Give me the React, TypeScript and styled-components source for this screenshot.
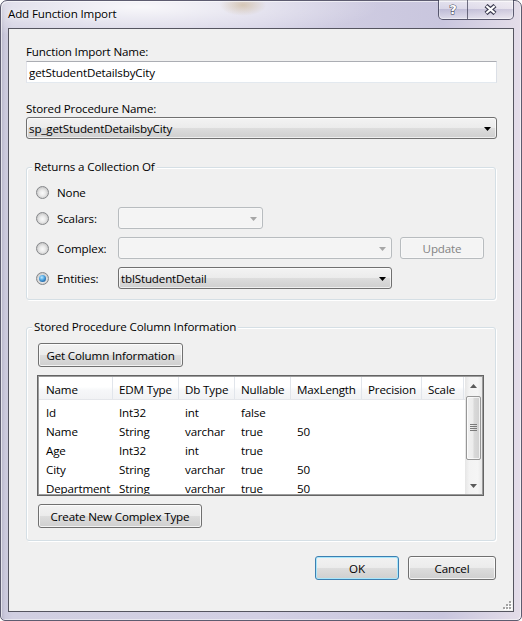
import styled, { createGlobalStyle } from "styled-components";

const uiFont = `"Open Sans", "Noto Sans", "Liberation Sans", sans-serif`;

const columns = ["Name", "EDM Type", "Db Type", "Nullable", "MaxLength", "Precision", "Scale"];
const colTemplate = "74px 66px 56px 56px 71px 60px 42px 1fr";

const rows = [
  ["Id", "Int32", "int", "false", "", "", ""],
  ["Name", "String", "varchar", "true", "50", "", ""],
  ["Age", "Int32", "int", "true", "", "", ""],
  ["City", "String", "varchar", "true", "50", "", ""],
  ["Department", "String", "varchar", "true", "50", "", ""],
];

const GlobalStyle = createGlobalStyle`
  html, body { margin: 0; padding: 0; }
  body {
    width: 522px;
    height: 621px;
    overflow: hidden;
    background: #ffffff;
    font-family: ${uiFont};
    font-size: 11.6px;
    letter-spacing: -0.15px;
    color: #000;
  }
  *, *::before, *::after { box-sizing: border-box; }
`;

const Window = styled.div`
  width: 522px;
  height: 621px;
  display: flex;
  flex-direction: column;
  padding: 0 7px 8px 7px;
  border: 1px solid #5d5c70;
  border-radius: 7px 7px 5px 5px;
  background:
    radial-gradient(ellipse 26px 12px at 242px 4px, rgba(190, 160, 110, 0.45), rgba(255, 255, 255, 0) 90%),
    radial-gradient(ellipse 280px 40px at 140px 6px, rgba(255, 255, 255, 0.85), rgba(255, 255, 255, 0) 85%),
    linear-gradient(90deg, #b8b6ca 0px, #cbc9dc 4px, #d1cfe1 12px, #d3d0e4 50%, #c9c6de 85%, #e4dde9 100%);
  box-shadow: inset 1px 1px 0 rgba(255, 255, 255, 0.6), inset -1px -1px 0 rgba(255, 255, 255, 0.5);
`;

const TitleBar = styled.div`
  height: 27px;
  flex: none;
  display: flex;
  justify-content: space-between;
  align-items: flex-start;
`;

const Title = styled.div`
  padding-top: 5px;
  line-height: 16px;
  color: #000;
  text-shadow: 0 0 6px rgba(255, 255, 255, 0.95), 0 0 2px rgba(255, 255, 255, 0.9);
`;

const CaptionGroup = styled.div`
  margin-top: -1px;
  height: 20px;
  display: flex;
  border: 1px solid rgba(58, 58, 80, 0.8);
  border-top: none;
  border-radius: 0 0 5px 5px;
  overflow: hidden;
  box-shadow: inset 0 0 0 1px rgba(255, 255, 255, 0.45);
`;

const CaptionButton = styled.div<{ $w: number }>`
  width: ${(p) => p.$w}px;
  display: flex;
  align-items: center;
  justify-content: center;
  background: linear-gradient(180deg, rgba(255, 255, 255, 0.5) 0%, rgba(255, 255, 255, 0.25) 50%, rgba(170, 168, 200, 0.35) 50%, rgba(255, 255, 255, 0.35) 100%);
  & + & {
    border-left: 1px solid rgba(58, 58, 80, 0.7);
  }
`;

const HelpGlyph = styled.span`
  font-family: "DejaVu Sans", sans-serif;
  font-weight: bold;
  font-size: 13px;
  line-height: 13px;
  letter-spacing: 0;
  color: #fff;
  -webkit-text-stroke: 1px #3d3d52;
  paint-order: stroke fill;
`;

const Client = styled.div`
  position: relative;
  flex: 1;
  display: flex;
  flex-direction: column;
  align-items: stretch;
  border: 1px solid #555560;
  background: #f0f0f0;
  padding: 14px 16px 0 17px;
`;

const Label = styled.div<{ $mt?: number }>`
  line-height: 15px;
  padding-top: 1px;
  margin-top: ${(p) => p.$mt ?? 0}px;
  margin-bottom: 2px;
`;

const TextInput = styled.input`
  height: 22px;
  width: 100%;
  border: 1px solid #abadb3;
  border-color: #abadb3 #dbdfe6 #e3e9ef #e2e3ea;
  background: #fff;
  padding: 1px 2px 0 2px;
  font: inherit;
  letter-spacing: inherit;
  color: #000;
  outline: none;
`;

const Combo = styled.div<{ $disabled?: boolean; $w?: number; $mt?: number }>`
  height: 22px;
  width: ${(p) => (p.$w ? `${p.$w}px` : "100%")};
  margin-top: ${(p) => p.$mt ?? 0}px;
  flex: none;
  display: flex;
  align-items: center;
  justify-content: space-between;
  padding: 1px 5px 0 2px;
  border: 1px solid ${(p) => (p.$disabled ? "#b8bcbf" : "#707070")};
  border-radius: 3px;
  background: ${(p) =>
    p.$disabled
      ? "#f4f4f4"
      : "linear-gradient(180deg, #f3f3f3 0%, #ebebeb 50%, #dddddd 50%, #cfcfcf 100%)"};
  box-shadow: inset 0 0 0 1px rgba(255, 255, 255, ${(p) => (p.$disabled ? 0.3 : 0.65)});
  line-height: 15px;
`;

const Arrow = ({ color = "#000" }: { color?: string }) => (
  <svg width="7" height="4" viewBox="0 0 7 4">
    <path d="M0 0h7L3.5 4z" fill={color} />
  </svg>
);

const GroupBox = styled.div<{ $mt: number; $pl: number; $pr: number; $pb: number }>`
  margin-top: ${(p) => p.$mt}px;
  margin-right: 1px;
  display: flex;
  flex-direction: column;
  align-items: flex-start;
  border: 1px solid #d5dfe5;
  border-radius: 3px;
  box-shadow: inset 1px 1px 0 #ffffff, 1px 1px 0 #ffffff;
  padding: 0 ${(p) => p.$pr}px ${(p) => p.$pb}px ${(p) => p.$pl}px;
`;

const Legend = styled.div<{ $ml: number }>`
  height: 16px;
  margin: -11px 0 0 ${(p) => p.$ml}px;
  padding: 2px 2px 0 2px;
  line-height: 15px;
  background: #f0f0f0;
`;

const RadioRow = styled.div<{ $mt: number }>`
  margin-top: ${(p) => p.$mt}px;
  height: 22px;
  align-self: stretch;
  display: flex;
  align-items: center;
`;

const RadioLabel = styled.label`
  width: 82px;
  flex: none;
  display: flex;
  align-items: center;
  gap: 8px;
  line-height: 15px;
  padding-top: 1px;
`;

const RadioCircle = styled.span<{ $checked?: boolean }>`
  width: 13px;
  height: 13px;
  margin-top: -1px;
  flex: none;
  border-radius: 50%;
  border: 1px solid #85878a;
  background: radial-gradient(circle at 50% 55%, #fafafa 0%, #ebebeb 35%, #c8c8c8 75%, #d4d4d4 100%);
  display: flex;
  align-items: center;
  justify-content: center;
  &::after {
    content: "";
    display: ${(p) => (p.$checked ? "block" : "none")};
    width: 7px;
    height: 7px;
    border-radius: 50%;
    background: radial-gradient(circle at 40% 35%, #bfeaff 0%, #53a8e2 40%, #1d5d9d 80%, #153f6c 100%);
  }
`;

const Button = styled.button<{ $w: number; $h?: number; $default?: boolean; $mt?: number }>`
  width: ${(p) => p.$w}px;
  height: ${(p) => p.$h ?? 24}px;
  margin-top: ${(p) => p.$mt ?? 0}px;
  margin-left: ${(p) => (p.$h ? 8 : 0)}px;
  flex: none;
  padding: 1px 0 0 0;
  font: inherit;
  letter-spacing: inherit;
  line-height: 15px;
  color: #000;
  border: 1px solid ${(p) => (p.$default ? "#3c7fb1" : "#707070")};
  border-radius: 3px;
  background: linear-gradient(180deg, #f2f2f2 0%, #ebebeb 50%, #dddddd 50%, #cfcfcf 100%);
  box-shadow: inset 0 0 0 1px ${(p) => (p.$default ? "#a8e6fb" : "rgba(255, 255, 255, 0.75)")};
  &:disabled {
    border-color: #b8bcbf;
    background: #f4f4f4;
    color: #838383;
    box-shadow: inset 0 0 0 1px rgba(255, 255, 255, 0.4);
  }
`;

const ListBox = styled.div`
  width: 447px;
  height: 121px;
  margin: 8px 0 0 -1px;
  flex: none;
  display: flex;
  border: 1px solid #646464;
  padding: 1px;
  background: #fff;
  box-shadow: inset 0 0 0 1px #9c9c9c;
`;

const ListContent = styled.div`
  flex: 1;
  display: flex;
  flex-direction: column;
  overflow: hidden;
`;

const HeaderRow = styled.div`
  height: 23px;
  flex: none;
  display: grid;
  grid-template-columns: ${colTemplate};
  background: linear-gradient(180deg, #ffffff 0%, #ffffff 45%, #f6f7f9 60%, #f1f2f4 100%);
  border-bottom: 1px solid #e4e6ea;
`;

const HeaderCell = styled.div<{ $first?: boolean }>`
  padding: 3px 0 0 ${(p) => (p.$first ? 7 : 6)}px;
  line-height: 19px;
  white-space: nowrap;
  overflow: hidden;
  border-right: 1px solid #e1e5eb;
  color: #000;
`;

const Rows = styled.div`
  padding-top: 3px;
`;

const Row = styled.div`
  height: 19px;
  display: grid;
  grid-template-columns: ${colTemplate};
`;

const Cell = styled.div<{ $first?: boolean }>`
  padding-left: ${(p) => (p.$first ? 7 : 6)}px;
  line-height: 19px;
  white-space: nowrap;
  overflow: hidden;
`;

const ScrollBar = styled.div`
  width: 17px;
  flex: none;
  display: flex;
  flex-direction: column;
  background: linear-gradient(90deg, #e6e6e6 0%, #f3f3f3 25%, #f5f5f5 75%, #e9e9e9 100%);
`;

const ScrollArrow = styled.div`
  height: 17px;
  flex: none;
  display: flex;
  align-items: center;
  justify-content: center;
`;

const ScrollTrack = styled.div`
  flex: 1;
  padding: 2px 1px 0 1px;
`;

const Thumb = styled.div`
  height: 64px;
  border: 1px solid #979797;
  border-radius: 2px;
  background: linear-gradient(90deg, #f1f1f1 0%, #ececec 45%, #d9d9d9 55%, #d0d0d0 100%);
  box-shadow: inset 0 0 0 1px rgba(255, 255, 255, 0.7);
  display: flex;
  align-items: center;
  justify-content: center;
`;

const Footer = styled.div`
  margin-top: 15px;
  margin-right: 1px;
  display: flex;
  justify-content: flex-end;
  gap: 9px;
`;

const Grip = styled.svg`
  position: absolute;
  right: 1px;
  bottom: 1px;
`;

const CloseIcon = () => (
  <svg width="13" height="11" viewBox="0 0 13 11">
    <path d="M2 1.5L11 9.5M11 1.5L2 9.5" stroke="#3d3d52" strokeWidth="4.4" />
    <path d="M2.4 2L10.6 9M10.6 2L2.4 9" stroke="#ffffff" strokeWidth="2.2" />
  </svg>
);

const UpArrow = () => (
  <svg width="7" height="4" viewBox="0 0 7 4">
    <path d="M3.5 0L7 4H0z" fill="#5a5a5a" />
  </svg>
);

const ThumbGrip = () => (
  <svg width="7" height="8" viewBox="0 0 7 8">
    {[0, 2, 4, 6].map((y) => (
      <rect key={y} x="0" y={y} width="7" height="1" fill="#7a7a7a" />
    ))}
  </svg>
);

const ResizeGrip = () => (
  <Grip width="9" height="9" viewBox="0 0 9 9">
    {[
      [6, 0],
      [3, 3],
      [6, 3],
      [0, 6],
      [3, 6],
      [6, 6],
    ].map(([x, y]) => (
      <g key={`${x}-${y}`}>
        <rect x={x + 1} y={y + 1} width="2" height="2" fill="#ffffff" />
        <rect x={x} y={y} width="2" height="2" fill="#a3a3a3" />
      </g>
    ))}
  </Grip>
);

export default function App() {
  return (
    <>
      <GlobalStyle />
      <Window>
        <TitleBar>
          <Title>Add Function Import</Title>
          <CaptionGroup>
            <CaptionButton $w={28}>
              <HelpGlyph>?</HelpGlyph>
            </CaptionButton>
            <CaptionButton $w={46}>
              <CloseIcon />
            </CaptionButton>
          </CaptionGroup>
        </TitleBar>

        <Client>
          <Label>Function Import Name:</Label>
          <TextInput defaultValue="getStudentDetailsbyCity" spellCheck={false} />

          <Label $mt={17}>Stored Procedure Name:</Label>
          <Combo $mt={-1}>
            <span>sp_getStudentDetailsbyCity</span>
            <Arrow />
          </Combo>

          <GroupBox $mt={28} $pl={9} $pr={11} $pb={10}>
            <Legend $ml={-4}>Returns a Collection Of</Legend>
            <RadioRow $mt={8}>
              <RadioLabel>
                <RadioCircle />
                None
              </RadioLabel>
            </RadioRow>
            <RadioRow $mt={4}>
              <RadioLabel>
                <RadioCircle />
                Scalars:
              </RadioLabel>
              <Combo $disabled $w={145}>
                <span />
                <Arrow color="#a7a7a7" />
              </Combo>
            </RadioRow>
            <RadioRow $mt={8}>
              <RadioLabel>
                <RadioCircle />
                Complex:
              </RadioLabel>
              <Combo $disabled $w={274}>
                <span />
                <Arrow color="#a7a7a7" />
              </Combo>
              <Button $w={84} $h={22} disabled>
                Update
              </Button>
            </RadioRow>
            <RadioRow $mt={8}>
              <RadioLabel>
                <RadioCircle $checked />
                Entities:
              </RadioLabel>
              <Combo $w={274}>
                <span>tblStudentDetail</span>
                <Arrow />
              </Combo>
            </RadioRow>
          </GroupBox>

          <GroupBox $mt={27} $pl={11} $pr={12} $pb={12}>
            <Legend $ml={-6}>Stored Procedure Column Information</Legend>
            <Button $w={145} $mt={10}>
              Get Column Information
            </Button>
            <ListBox>
              <ListContent>
                <HeaderRow>
                  {columns.map((c, i) => (
                    <HeaderCell key={c} $first={i === 0}>
                      {c}
                    </HeaderCell>
                  ))}
                </HeaderRow>
                <Rows>
                  {rows.map((r) => (
                    <Row key={r[0]}>
                      {r.map((v, i) => (
                        <Cell key={i} $first={i === 0}>
                          {v}
                        </Cell>
                      ))}
                    </Row>
                  ))}
                </Rows>
              </ListContent>
              <ScrollBar>
                <ScrollArrow>
                  <UpArrow />
                </ScrollArrow>
                <ScrollTrack>
                  <Thumb>
                    <ThumbGrip />
                  </Thumb>
                </ScrollTrack>
                <ScrollArrow>
                  <Arrow color="#5a5a5a" />
                </ScrollArrow>
              </ScrollBar>
            </ListBox>
            <Button $w={164} $mt={8}>
              Create New Complex Type
            </Button>
          </GroupBox>

          <Footer>
            <Button $w={84} $default>
              OK
            </Button>
            <Button $w={88}>Cancel</Button>
          </Footer>

          <ResizeGrip />
        </Client>
      </Window>
    </>
  );
}
